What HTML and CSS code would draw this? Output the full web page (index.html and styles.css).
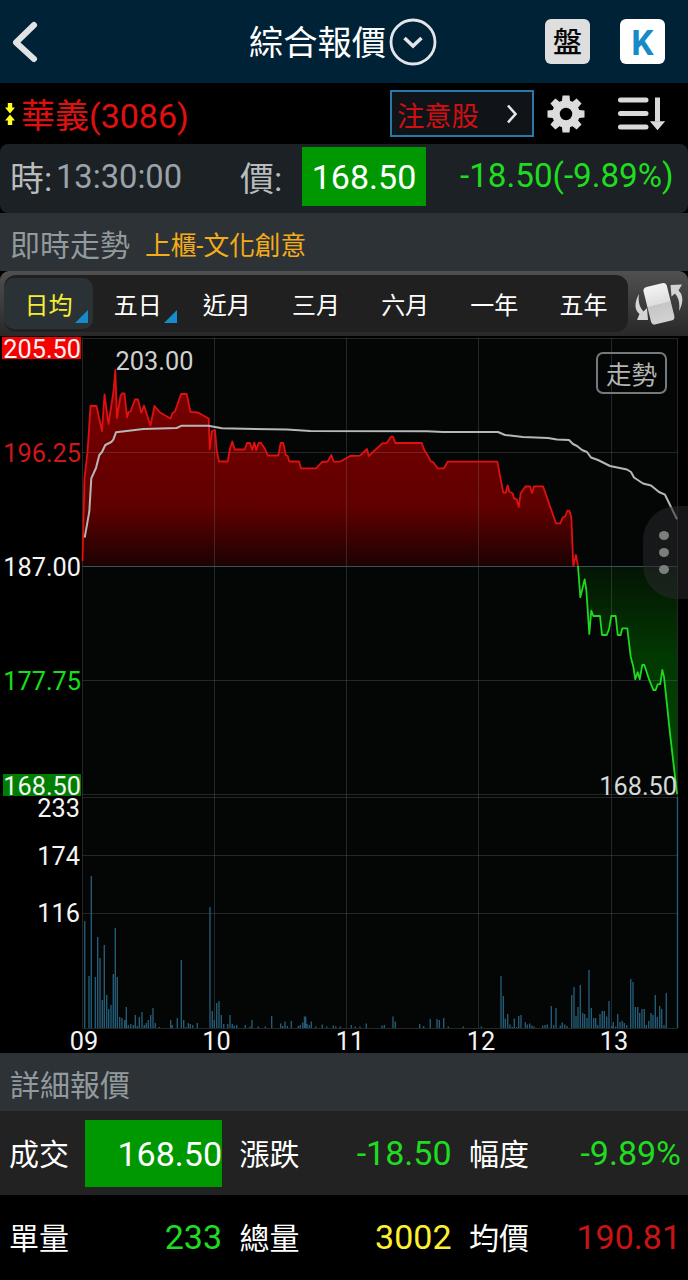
FILE: index.html
```html
<!DOCTYPE html>
<html lang="zh-Hant">
<head>
    <meta charset="UTF-8">
    <title>綜合報價</title>
    <link rel="stylesheet" href="styles.css">
</head>
<body>
    <div class="app">
        <div class="header">
            <svg class="back" width="32" height="44" viewBox="0 0 32 44" fill="none" stroke="#e0e2e4" stroke-width="6" stroke-linecap="round" stroke-linejoin="round">
                <path d="M23 5L5 22.500L23 39"/>
            </svg>
            <div class="title">
                <h1>綜合報價</h1>
                <svg width="48" height="48" viewBox="0 0 48 48" fill="none" stroke="#e3e5e8">
                    <circle cx="24" cy="24" r="22" stroke-width="2.800"/>
                    <path d="M15.500 20L24 28L32.500 20" stroke-width="3.600"/>
                </svg>
            </div>
            <div class="shortcuts">
                <span class="key">盤</span>
                <span class="key key-k">K</span>
            </div>
        </div>

        <div class="stock">
            <svg width="10" height="24" viewBox="0 0 10 24" fill="#ffff20">
                <path d="M2.800 1h4.400v4.500h2.800L5 11.500L0 5.500H2.800zM2.800 23h4.400v-4.500h2.800L5 12.500L0 18.500H2.800z"/>
            </svg>
            <span class="stock-name">華義(3086)</span>
            <button class="notice">
                注意股
                <svg width="14" height="22" viewBox="0 0 14 22" fill="none" stroke="#e6e6e6" stroke-width="2.600">
                    <path d="M3 2.500L10.500 11L3 19.500"/>
                </svg>
            </button>
            <svg class="gear" width="40" height="40" viewBox="-20 -20 40 40">
                <g fill="#dcdcdc">
                    <g id="teeth">
                        <path d="M-3.500 -18.500h7l0.800 8h-8.600zM-3.500 18.500h7l0.800 -8h-8.600z"/>
                        <path d="M-3.500 -18.500h7l0.800 8h-8.600zM-3.500 18.500h7l0.800 -8h-8.600z" transform="rotate(90)"/>
                    </g>
                    <use href="#teeth" transform="rotate(45)"/>
                </g>
                <circle r="10" fill="none" stroke="#dcdcdc" stroke-width="7.500"/>
            </svg>
            <svg class="sort" width="50" height="38" viewBox="0 0 50 38" stroke="#d9d9d9" stroke-width="5" stroke-linecap="round">
                <path d="M4.500 5h25.500M4.500 18.500h25.500M4.500 32h25.500"/>
                <path d="M41.500 2.500v24" stroke-width="5" stroke-linecap="butt"/>
                <path d="M35.500 27h12L41.500 34z" fill="#d9d9d9" stroke-width="1.500"/>
            </svg>
        </div>

        <div class="quote">
            <span class="quote-label">時:</span>
            <span class="quote-time">13:30:00</span>
            <span class="quote-label quote-price-label">價:</span>
            <span class="quote-price">168.50</span>
            <span class="quote-change">-18.50(-9.89%)</span>
        </div>

        <div class="section">
            <span>即時走勢</span>
            <span class="category">上櫃-文化創意</span>
        </div>

        <div class="range">
            <div class="tabs">
                <span class="tab active more">日均</span>
                <span class="tab more">五日</span>
                <span class="tab">近月</span>
                <span class="tab">三月</span>
                <span class="tab">六月</span>
                <span class="tab">一年</span>
                <span class="tab">五年</span>
            </div>
            <svg class="rotate" width="50" height="50" viewBox="0 0 50 50">
                <defs>
                    <linearGradient id="phone" x1="0" y1="0" x2="0" y2="1">
                        <stop offset="0" stop-color="#f4f4f4"/>
                        <stop offset="0.500" stop-color="#dedede"/>
                        <stop offset="0.520" stop-color="#c6c6c6"/>
                        <stop offset="1" stop-color="#d2d2d2"/>
                    </linearGradient>
                </defs>
                <rect x="14" y="5.500" width="24" height="38.500" rx="4" fill="url(#phone)" transform="rotate(-14 26 25)"/>
                <g fill="#d4d4d4">
                    <path d="M6 15C1 24 1.500 31 6.500 35L4 41L15 41L14 29L10.500 32.500C6.500 28 5 23 6 15z"/>
                    <path d="M46 32C51 23 50 15 45.500 11.500L49 5.500L37.500 6L38.500 17.500L42 14.500C46 19 47 25 46 32z"/>
                </g>
            </svg>
        </div>

        <div class="chart">
            <svg width="688" height="717" viewBox="0 336 688 717">
                <defs>
                    <linearGradient id="up" gradientUnits="userSpaceOnUse" x1="0" y1="370" x2="0" y2="566">
                        <stop offset="0" stop-color="#7c0000"/>
                        <stop offset="0.700" stop-color="#600000"/>
                        <stop offset="1" stop-color="#1c0202"/>
                    </linearGradient>
                    <linearGradient id="down" gradientUnits="userSpaceOnUse" x1="0" y1="566" x2="0" y2="794">
                        <stop offset="0" stop-color="#041404"/>
                        <stop offset="0.400" stop-color="#023802"/>
                        <stop offset="1" stop-color="#004a00"/>
                    </linearGradient>
                </defs>

                <rect x="82" y="338" width="596" height="691" fill="#030605"/>

                <path id="upArea" fill="url(#up)"/>
                <path id="downArea" fill="url(#down)"/>

                <path class="grid" d="M82.500 338.500H677.500M82.500 452.500H677.500M82.500 680.500H677.500M82.500 794.500H677.500M82.500 797.500H677.500M82.500 855.500H677.500M82.500 913.500H677.500M82.500 1028.500H677.500"/>
                <path class="grid" d="M82.500 338V1028M214.500 338V1028M346.500 338V1028M478.500 338V1028M611.500 338V1028M677.500 338V1028"/>
                <path class="base" d="M82.500 566.500H677.500"/>

                <path id="volume" class="volume"/>
                <polyline id="upLine" class="line" stroke="#e01010"/>
                <polyline id="downLine" class="line" stroke="#20d820"/>
                <polyline class="line average" points="84.700,537.700 89.300,511.700 91.300,478.300 96,468 99.300,455 102,452 105.300,445 111.300,442 113.300,439.700 116,432.300 126.700,431 143.300,429 176.700,428 181.700,425.700 208.300,425.700 222,428.300 287,429.500 310,431 427,431.300 443,432 498,432 505,435 523,437 548,438 557,439.500 569,440 573,444 577,446 582,450 587,452 591,457.500 598,460 610,466 627,469.500 631,472 634,477.500 643,483.500 651,485.500 659,492 665,494.700 677,519.300"/>

                <rect x="2" y="337" width="79" height="22" fill="#f60000"/>
                <rect x="3" y="774" width="78" height="22" fill="#007e00"/>
                <g class="axis" text-anchor="end">
                    <text x="81" y="357.500">205.50</text>
                    <text x="81" y="461.500" fill="#cc1818">196.25</text>
                    <text x="81" y="575.500">187.00</text>
                    <text x="81" y="690" fill="#14e014">177.75</text>
                    <text x="81" y="794.500">168.50</text>
                    <text x="80" y="816.500">233</text>
                    <text x="80" y="864.500">174</text>
                    <text x="80" y="922">116</text>
                    <text x="677" y="794.500" fill="#d8d8d8">168.50</text>
                </g>
                <g class="axis" text-anchor="middle">
                    <text x="154.500" y="369.500" fill="#d0d0d0">203.00</text>
                    <text x="84" y="1050">09</text>
                    <text x="216.500" y="1050">10</text>
                    <text x="350" y="1050">11</text>
                    <text x="481" y="1050">12</text>
                    <text x="614" y="1050">13</text>
                </g>
            </svg>
            <span class="mode">走勢</span>
            <div class="handle"><i></i><i></i><i></i></div>
        </div>

        <div class="section detail-title">詳細報價</div>

        <div class="details">
            <div class="cell"><span>成交</span><b class="filled">168.50</b></div>
            <div class="cell"><span>漲跌</span><b class="green">-18.50</b></div>
            <div class="cell"><span>幅度</span><b class="green">-9.89%</b></div>
        </div>
        <div class="details dark">
            <div class="cell"><span>單量</span><b class="green">233</b></div>
            <div class="cell"><span>總量</span><b class="yellow">3002</b></div>
            <div class="cell"><span>均價</span><b class="red">190.81</b></div>
        </div>
    </div>

    <script src="chart.js"></script>
</body>
</html>
```
FILE: styles.css
```css
body {
    margin: 0;
    background: #000;
    color: #fff;
    font-family: Roboto, "Noto Sans CJK TC", sans-serif;
}

.app {
    width: 688px;
    height: 1280px;
    overflow: hidden;
}

.header {
    display: grid;
    grid-template-columns: 150px 1fr 150px;
    align-items: center;
    height: 83px;
    background: #002236;
}

.back {
    margin-left: 11px;
}

.title {
    display: flex;
    align-items: center;
    justify-content: center;
    gap: 3px;
    margin-right: 2px;
}

.title h1 {
    margin: 0;
    font-size: 34.3px;
    font-weight: 400;
    line-height: 48px;
    padding-top: 2px;
}

.shortcuts {
    display: flex;
    gap: 30px;
    padding-left: 7px;
}

.key {
    box-sizing: border-box;
    width: 45px;
    height: 45px;
    padding-top: 2px;
    border-radius: 6px;
    background: #dedede;
    color: #080808;
    font-size: 29px;
    font-weight: 500;
    line-height: 45px;
    text-align: center;
}

.key-k {
    background: #fff;
    color: #168bc8;
    font-size: 35px;
    font-weight: 700;
}

.stock {
    display: flex;
    align-items: center;
    height: 61px;
    padding-left: 5px;
}

.stock-name {
    width: 369px;
    margin-left: 6px;
    color: #e01010;
    font-size: 34px;
}

.notice {
    display: flex;
    align-items: center;
    justify-content: space-between;
    box-sizing: border-box;
    width: 144px;
    height: 47px;
    padding: 0 13px 0 5px;
    border: 2px solid #2878a8;
    background: #101418;
    color: #d01010;
    font: inherit;
    font-size: 27.3px;
}

.gear {
    margin-left: 12px;
}

.sort {
    margin-left: 30px;
}

.quote {
    display: flex;
    align-items: center;
    height: 69px;
    border-radius: 8px;
    background: #1b2124;
    font-size: 34px;
}

.quote-label {
    width: 46px;
    margin-bottom: 4px;
    padding-left: 10px;
    color: #b8bcbe;
}

.quote-time {
    width: 174px;
    margin-bottom: 3px;
    color: #9ca2a8;
    font-size: 32.7px;
}

.quote-price-label {
    width: 62px;
}

.quote-price {
    width: 124px;
    height: 59px;
    margin-bottom: 4px;
    background: #009800;
    line-height: 60px;
    text-align: center;
}

.quote-change {
    margin: 0 0 7px 34px;
    color: #20dc20;
    font-size: 33.2px;
}

.section {
    display: flex;
    align-items: center;
    gap: 15px;
    box-sizing: border-box;
    height: 58px;
    padding: 2px 0 0 10px;
    background: #2d3236;
    color: #929a9e;
    font-size: 30px;
}

.category {
    color: #f4ac18;
    font-size: 25.7px;
}

.range {
    display: flex;
    align-items: center;
    box-sizing: border-box;
    height: 65px;
    padding-left: 4px;
    border-radius: 9px 9px 0 0;
    background: linear-gradient(#505050, #282828);
}

.tabs {
    display: flex;
    width: 624px;
    height: 57px;
    border-radius: 12px;
    background: #202020;
}

.tab {
    position: relative;
    flex: 1;
    font-size: 24px;
    line-height: 63px;
    text-align: center;
}

.tab.active {
    height: 51px;
    margin-top: 3px;
    border-radius: 10px;
    background: #2b3236;
    color: #f6ec30;
    line-height: 57px;
}

.more::after {
    content: "";
    position: absolute;
    right: 5px;
    bottom: 9px;
    border-left: 13px solid transparent;
    border-bottom: 13px solid #168acb;
}

.more.active::after {
    bottom: 6px;
}

.rotate {
    margin-left: 5px;
}

.chart {
    position: relative;
    height: 717px;
}

.chart svg {
    display: block;
}

.grid {
    fill: none;
    stroke: #a0b0b0;
    stroke-opacity: 0.2;
}

.base {
    stroke: #3a5060;
}

.line {
    fill: none;
    stroke-width: 1.8;
    stroke-linejoin: round;
}

.average {
    stroke: #b4b8b8;
    stroke-width: 2;
}

.volume {
    fill: none;
    stroke: #245a74;
    stroke-width: 1.4;
}

.axis {
    fill: #f4f4f4;
    font-size: 25.3px;
}

.mode {
    position: absolute;
    top: 16px;
    left: 596px;
    box-sizing: border-box;
    width: 71px;
    height: 42px;
    border: 2px solid #75797b;
    border-radius: 7px;
    color: #b4b4b4;
    font-size: 25.5px;
    line-height: 42px;
    text-align: center;
}

.handle {
    position: absolute;
    top: 170px;
    right: 0;
    display: flex;
    flex-direction: column;
    align-items: center;
    justify-content: center;
    gap: 8px;
    box-sizing: border-box;
    width: 45px;
    height: 93px;
    padding-right: 3px;
    border-radius: 34px 0 0 34px;
    background: rgba(40, 40, 44, 0.55);
}

.handle i {
    width: 10px;
    height: 9px;
    border-radius: 50%;
    background: #7c7e7c;
}

.details {
    display: grid;
    grid-template-columns: 213px 212px 212px;
    column-gap: 17.5px;
    height: 84px;
    padding-left: 9px;
    background: #222;
}

.details.dark {
    height: 84px;
    background: #000;
}

.cell {
    display: flex;
    align-items: center;
    justify-content: space-between;
    font-size: 30px;
}

.cell span {
    margin-bottom: 3px;
}

.cell b {
    font-size: 34px;
    font-weight: 400;
}

.filled {
    width: 137px;
    height: 67px;
    background: #009800;
    line-height: 68px;
    text-align: right;
}

.green {
    color: #20dc20;
}

.yellow {
    color: #fcf030;
}

.red {
    color: #c81414;
}
```
FILE: chart.js
```js
const BASE_Y = 566;
const VOLUME_Y = 1028;

// 平盤以上走勢
const up = [
    [82.5, 561], [84.5, 478], [87.5, 452], [90.5, 406], [96.5, 406], [102, 431], [104.5, 394.5], [108.5, 424],
    [113.5, 391.5], [115.3, 370], [117, 418], [120.5, 396], [122, 393.5], [124.5, 393.5], [127, 417.5], [128.5, 412],
    [130.5, 411.5], [135, 399.5], [138, 399.5], [141.3, 413], [144, 405.5], [150.5, 425.5], [154.5, 406], [160, 412.5],
    [170.5, 418.5], [172.5, 413], [175, 411.5], [181, 394], [186.7, 394], [190.5, 412], [198, 412.5], [208.7, 418.5],
    [209.7, 449], [212, 431], [215, 430], [216.7, 450], [219, 461.5], [227.7, 461.5], [230, 448.5], [232.3, 441.5],
    [234.7, 449.5], [244.7, 449.5], [247, 443], [250, 443], [252.3, 450], [254.3, 442.5], [256.3, 450], [258.7, 443],
    [261, 443], [265, 449], [267.7, 455.5], [278.3, 455.5], [280.7, 443], [283.3, 443], [285.7, 455], [287.7, 456],
    [289.3, 461.5], [299, 461.5], [301, 468.3], [316, 468.3], [322, 462], [327.7, 461.5], [331.3, 455], [333.7, 461.7],
    [340, 461.7], [350, 456], [360, 455.7], [367, 449], [368.7, 456], [382.3, 443.3], [386.7, 443], [391, 436.7],
    [393, 436.7], [395.3, 443], [421.7, 443], [424.3, 450], [427.3, 454.7], [430.7, 461.3], [433, 462], [437.7, 468.3],
    [444, 468.3], [447.5, 461.7], [497.3, 461.7], [503.3, 492.7], [505.7, 492.7], [507.7, 485.3], [509.3, 491.7],
    [512.7, 493.3], [514, 498.3], [516.7, 499.3], [518.7, 507], [520.7, 493.3], [525.3, 486.5], [530, 486.5],
    [532, 493], [534, 486.3], [543, 486.3], [556, 523.3], [560.3, 523.3], [562.7, 517.7], [565, 516.7],
    [567.3, 510.7], [569.3, 510.7], [571.3, 517], [573.3, 566], [576, 555], [578, 566]
];

// 平盤以下走勢
const down = [
    [578, 566], [580.3, 597.3], [584.7, 579.3], [586.3, 590], [589.3, 634], [591.3, 610.7], [593.3, 616], [600, 616],
    [602, 635], [606.7, 635], [609, 629.3], [611.3, 616], [615.7, 616], [617.7, 635], [620.7, 635], [622.3, 628.3],
    [627.3, 628.3], [630.7, 656.7], [633.3, 666.7], [635.3, 679.3], [637.7, 672.3], [639.7, 679.3], [642.3, 665],
    [644.3, 665], [648.7, 678.3], [653.3, 690], [655.7, 690], [657.7, 684.3], [660.3, 684], [662.3, 670],
    [664, 676.7], [670, 733.3], [677, 794]
];

// 成交量 [x, 高度]
const volume = [
    [84.7, 107], [89, 52], [91.3, 152], [95.3, 51], [97.7, 91], [100, 70], [102.3, 28], [104.3, 83], [106.7, 33],
    [108.7, 19], [111, 23], [113.3, 54], [115.3, 100], [117.3, 51], [119.7, 11], [122, 10], [124.7, 8], [126.3, 21],
    [128.3, 3], [130.7, 4], [133.3, 3], [135.3, 13], [137.3, 2], [139.3, 11], [142, 16], [144.3, 3], [146.3, 5],
    [148.3, 8], [150.7, 13], [153, 20], [155.3, 5], [159.3, 1], [170.7, 8], [172.3, 3], [177.3, 10], [181.3, 68],
    [183.7, 8], [186, 1], [188.3, 5], [190.3, 4], [192.7, 3], [197.3, 5], [210, 121], [212.3, 17], [214.3, 8],
    [216.7, 25], [219, 27], [221.3, 13], [223.7, 4], [227.7, 4], [230, 13], [232.3, 4], [234.3, 2], [236.7, 3],
    [245.3, 3], [250, 1.5], [252, 8], [258.3, 1.5], [265.3, 1.5], [271.7, 12], [280.7, 4.5], [282.7, 2],
    [285, 6.5], [287.3, 2], [291.3, 7], [298.3, 2], [300.3, 3], [302.7, 5.5], [304.5, 11.5], [305.7, 11.5],
    [307, 4], [309.3, 3], [311.3, 6.5], [315.7, 1.5], [322.3, 3.5], [326.7, 1.5], [333.3, 2.5], [335.7, 1.5],
    [340.3, 1.5], [351.3, 3], [355.3, 1.5], [360, 1.5], [366.3, 4.5], [382, 2.5], [384.3, 3], [393, 11.5],
    [395.3, 6.5], [419.7, 4], [423.7, 2], [430.3, 9], [437, 9], [439.3, 8], [443.7, 10], [448.3, 1.5], [463.3, 1.5],
    [481.3, 1.5], [501, 52], [503.3, 32], [505.3, 9.5], [507.7, 14], [510, 3.5], [512.3, 1], [514.3, 9.5],
    [516.7, 1], [518.7, 12], [521, 13], [525.3, 6], [527.3, 3.5], [529.7, 4.5], [532, 2.5], [534, 1.5],
    [542.7, 2.5], [545, 3], [547.3, 3.5], [551.3, 22], [553.7, 3], [556, 20], [560.3, 2.5], [562.3, 5.5],
    [564.7, 3.5], [567, 2], [571.7, 33], [574, 41], [576, 12], [578, 21], [580.3, 43], [582.7, 15], [584.7, 14],
    [587, 10], [589, 58], [591.3, 20], [593.7, 10], [595.7, 10], [597.7, 3], [600, 14], [602.3, 17], [604.3, 17],
    [606.7, 11.5], [609, 27], [611.7, 2], [613.3, 6], [615.7, 1.5], [617.7, 14], [620, 6], [622.3, 7], [624.3, 5],
    [626.7, 3], [630.7, 49], [633, 46], [635.3, 21], [637.7, 21], [639.7, 15], [642, 19], [644.3, 19], [646.3, 3],
    [648.7, 7], [651, 15], [653, 13], [655.3, 33], [657.3, 11], [659.7, 22], [661.7, 19], [664, 3], [666.3, 35],
    [677.5, 231]
];

function drawTrend(name, points) {
    const list = points.map(p => p.join(',')).join(' ');
    const first = points[0][0];
    const last = points[points.length - 1][0];
    document.getElementById(name + 'Line').setAttribute('points', list);
    document.getElementById(name + 'Area').setAttribute('d', `M${first},${BASE_Y} L${list} L${last},${BASE_Y}Z`);
}

drawTrend('up', up);
drawTrend('down', down);

document.getElementById('volume').setAttribute('d', volume.map(([x, h]) => `M${x} ${VOLUME_Y}v${-h}`).join(''));
```
